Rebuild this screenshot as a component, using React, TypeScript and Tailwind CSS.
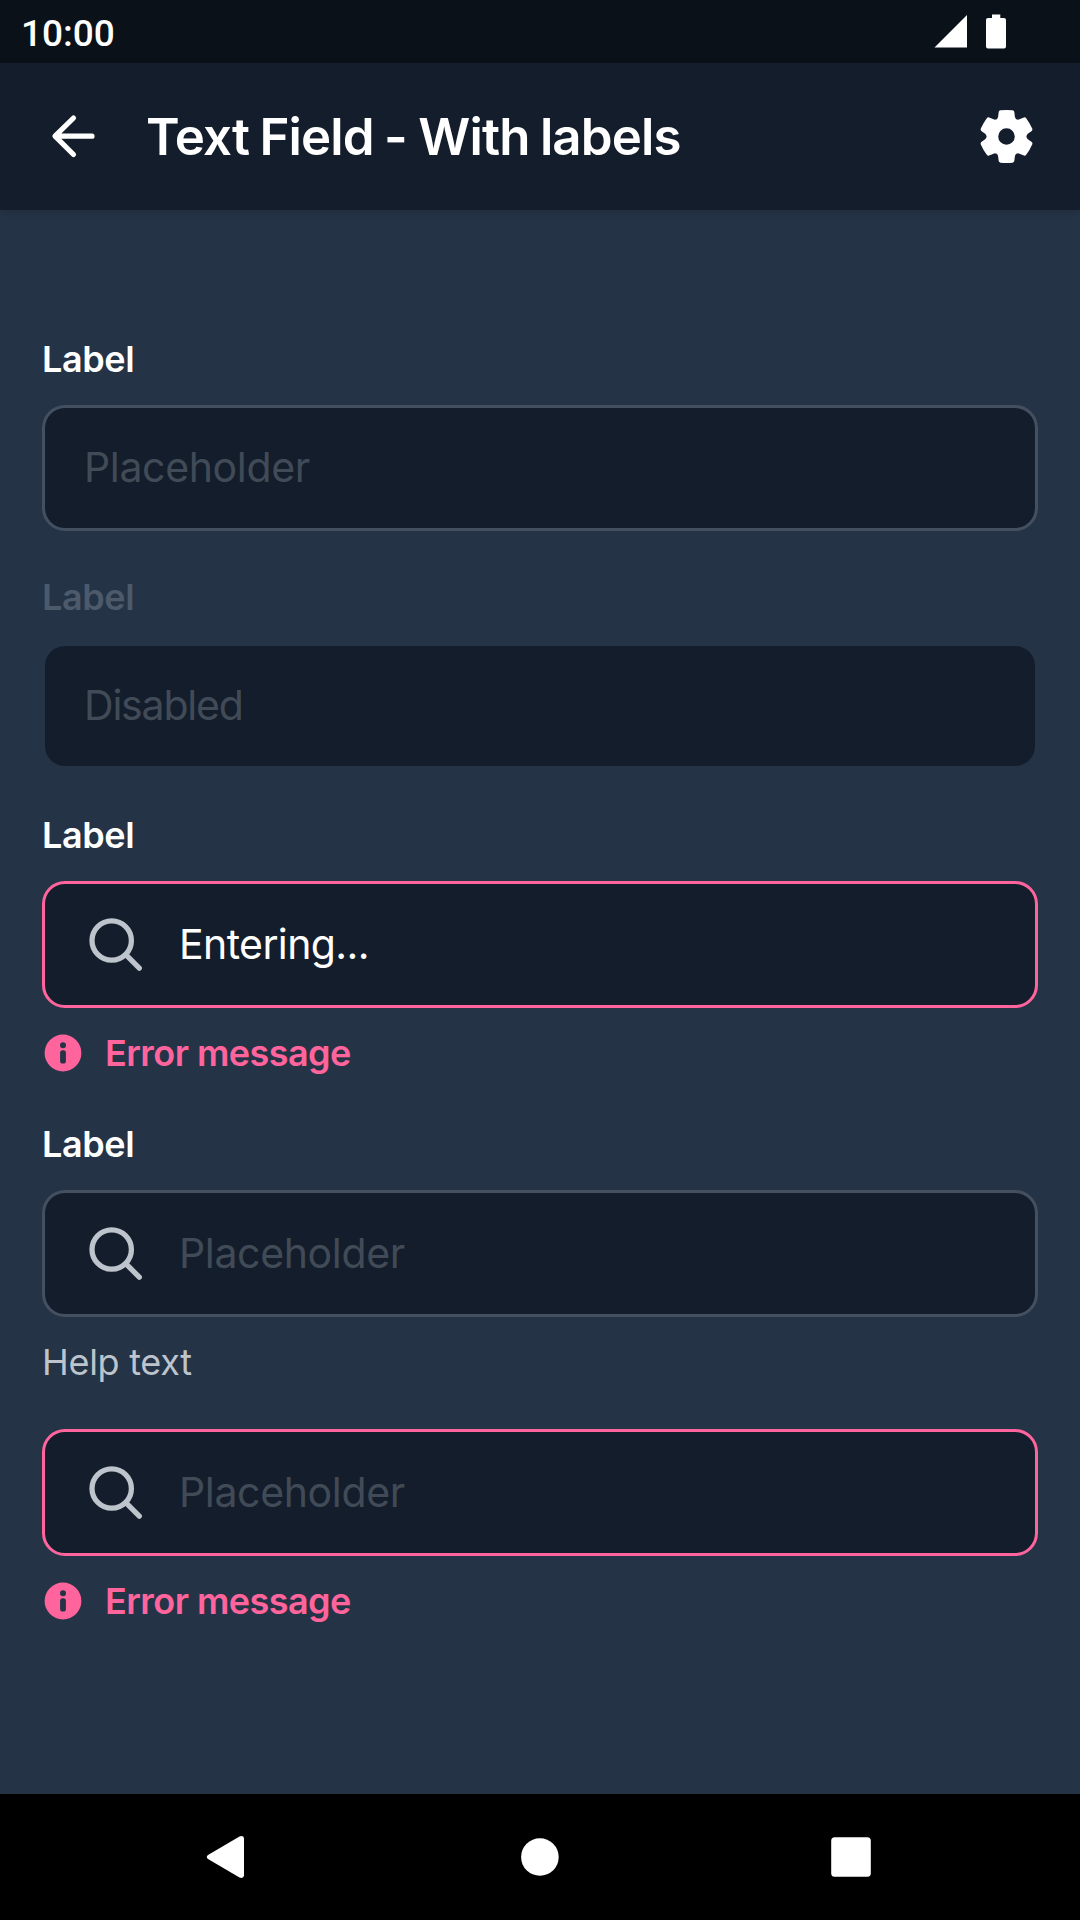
import React from "react";

const GEAR_ANGLES = [0, 60, 120, 180, 240, 300];

function GearIcon() {
  return (
    <svg className="size-[63px]" viewBox="-31.5 -31.5 63 63" fill="#fff">
      <circle r="13.8" fill="none" stroke="#fff" strokeWidth="11" />
      {GEAR_ANGLES.map((a) => (
        <path
          key={a}
          transform={`rotate(${a})`}
          d="M-10 -17.3Q-8.6 -18.1 -8.4 -19.8L-7.8 -24.6Q-7.6 -26 -6 -26.2Q0 -26.9 6 -26.2Q7.6 -26 7.8 -24.6L8.4 -19.8Q8.6 -18.1 10 -17.3L6 -10H-6Z"
        />
      ))}
    </svg>
  );
}

function BackIcon() {
  return (
    <svg
      className="size-[63px]"
      viewBox="0 0 63 63"
      fill="none"
      stroke="#fff"
      strokeWidth="5.2"
      strokeLinecap="round"
      strokeLinejoin="round"
    >
      <path d="M50 31.2H13.500M31.500 13L13 31.200L31.500 49.500" />
    </svg>
  );
}

function SearchIcon() {
  return (
    <svg
      className="size-[63px] shrink-0"
      viewBox="0 0 63 63"
      fill="none"
      stroke="#bdc4cc"
      strokeWidth="5.3"
      strokeLinecap="round"
    >
      <circle cx="27.7" cy="27.5" r="19.7" />
      <path d="M41.8 41.7L55.3 55.2" />
    </svg>
  );
}

function InfoIcon() {
  return (
    <svg className="size-[42px] shrink-0" viewBox="0 0 42 42">
      <circle cx="21" cy="21" r="18.4" fill="#ff649c" />
      <circle cx="21" cy="13.2" r="3" fill="#243346" />
      <rect x="18.1" y="18.2" width="5.8" height="13.4" rx="2.6" fill="#243346" />
    </svg>
  );
}

function Label({ disabled = false }: { disabled?: boolean }) {
  return (
    <div
      className={`mb-[25px] h-[42px] text-[36px] leading-[42px] font-semibold tracking-[-0.4px] ${
        disabled ? "text-[#4c5a6c]" : "text-white"
      }`}
    >
      Label
    </div>
  );
}

type FieldProps = {
  text: string;
  state?: "normal" | "disabled" | "error";
  icon?: boolean;
  entered?: boolean;
};

function Field({ text, state = "normal", icon = false, entered = false }: FieldProps) {
  const border =
    state === "error"
      ? "border-[#ff649c]"
      : state === "disabled"
        ? "border-transparent"
        : "border-[#444f60]";
  const tracking =
    state === "disabled" ? "tracking-[-1.2px]" : entered ? "tracking-[-0.6px]" : "tracking-[-0.35px]";
  return (
    <div
      className={`flex items-center rounded-[23px] border-[3px] bg-[#141d2b] bg-clip-padding pl-[39px] text-[41px] leading-[52px] ${
        icon ? "h-[127px]" : "h-[126px]"
      } ${border}`}
    >
      {icon && (
        <div className="mr-[32px]">
          <SearchIcon />
        </div>
      )}
      <span className={`pb-[2px] ${tracking} ${entered ? "text-white" : "text-[#414b57]"}`}>{text}</span>
    </div>
  );
}

function ErrorMessage() {
  return (
    <div className="mt-[24px] flex h-[42px] items-center text-[#ff649c]">
      <InfoIcon />
      <span className="ml-[21px] text-[36px] leading-[42px] font-semibold tracking-[-0.55px]">
        Error message
      </span>
    </div>
  );
}

export default function App() {
  return (
    <div className="flex h-[1920px] w-[1080px] flex-col overflow-hidden bg-[#243346] font-['Inter',sans-serif]">
      <div className="flex h-[63px] shrink-0 items-center bg-[#0a1119] pr-[72px] pl-[21px]">
        <span className="flex-1 pt-[5px] font-['Roboto',sans-serif] text-[37px] leading-[44px] font-medium text-white">
          10:00
        </span>
        <svg className="h-[36px] w-[74px]" viewBox="0 0 74 36" fill="#fff">
          <path d="M0.5 33.500L33 1V33.500Z" />
          <path d="M58 0.500H66.300V4H70Q72 4 72 6V32.500Q72 34.500 70 34.500H54Q52 34.500 52 32.500V6Q52 4 54 4H58Z" />
        </svg>
      </div>
      <header className="z-10 flex h-[147px] shrink-0 items-center bg-[#141d2b] pr-[42px] pl-[42px] shadow-[0_2px_6px_rgba(0,0,0,0.15)]">
        <BackIcon />
        <h1 className="ml-[41px] flex-1 text-[51px] leading-[62px] font-semibold tracking-[-0.9px] [word-spacing:-1.5px] text-white">
          Text Field <span className="mr-px">-</span> With labels
        </h1>
        <div className="-mr-[31px] -translate-x-[31px]">
          <GearIcon />
        </div>
      </header>
      <main className="flex-1 px-[42px] pt-[128px]">
        <section className="mb-[45px]">
          <Label />
          <Field text="Placeholder" />
        </section>
        <section className="mb-[45px]">
          <Label disabled />
          <Field text="Disabled" state="disabled" />
        </section>
        <section className="mb-[49px]">
          <Label />
          <Field text="Entering..." state="error" icon entered />
          <ErrorMessage />
        </section>
        <section className="mb-[46px]">
          <Label />
          <Field text="Placeholder" icon />
          <div className="mt-[24px] h-[42px] text-[36px] leading-[42px] tracking-[-0.3px] text-[#bdc4cc]">
            Help text
          </div>
        </section>
        <section>
          <Field text="Placeholder" state="error" icon />
          <ErrorMessage />
        </section>
      </main>
      <nav className="h-[126px] shrink-0 bg-black">
        <svg className="h-[126px] w-[1080px]" viewBox="0 0 1080 126" fill="#fff">
          <path d="M208 61Q205.500 63 208 65L239.500 83.500Q243.500 85 244 81.500V44.500Q243.500 41 239.500 42.500Z" />
          <circle cx="539.900" cy="63" r="18.800" />
          <rect x="831.200" y="43.200" width="39.600" height="39.600" rx="3.500" />
        </svg>
      </nav>
    </div>
  );
}
